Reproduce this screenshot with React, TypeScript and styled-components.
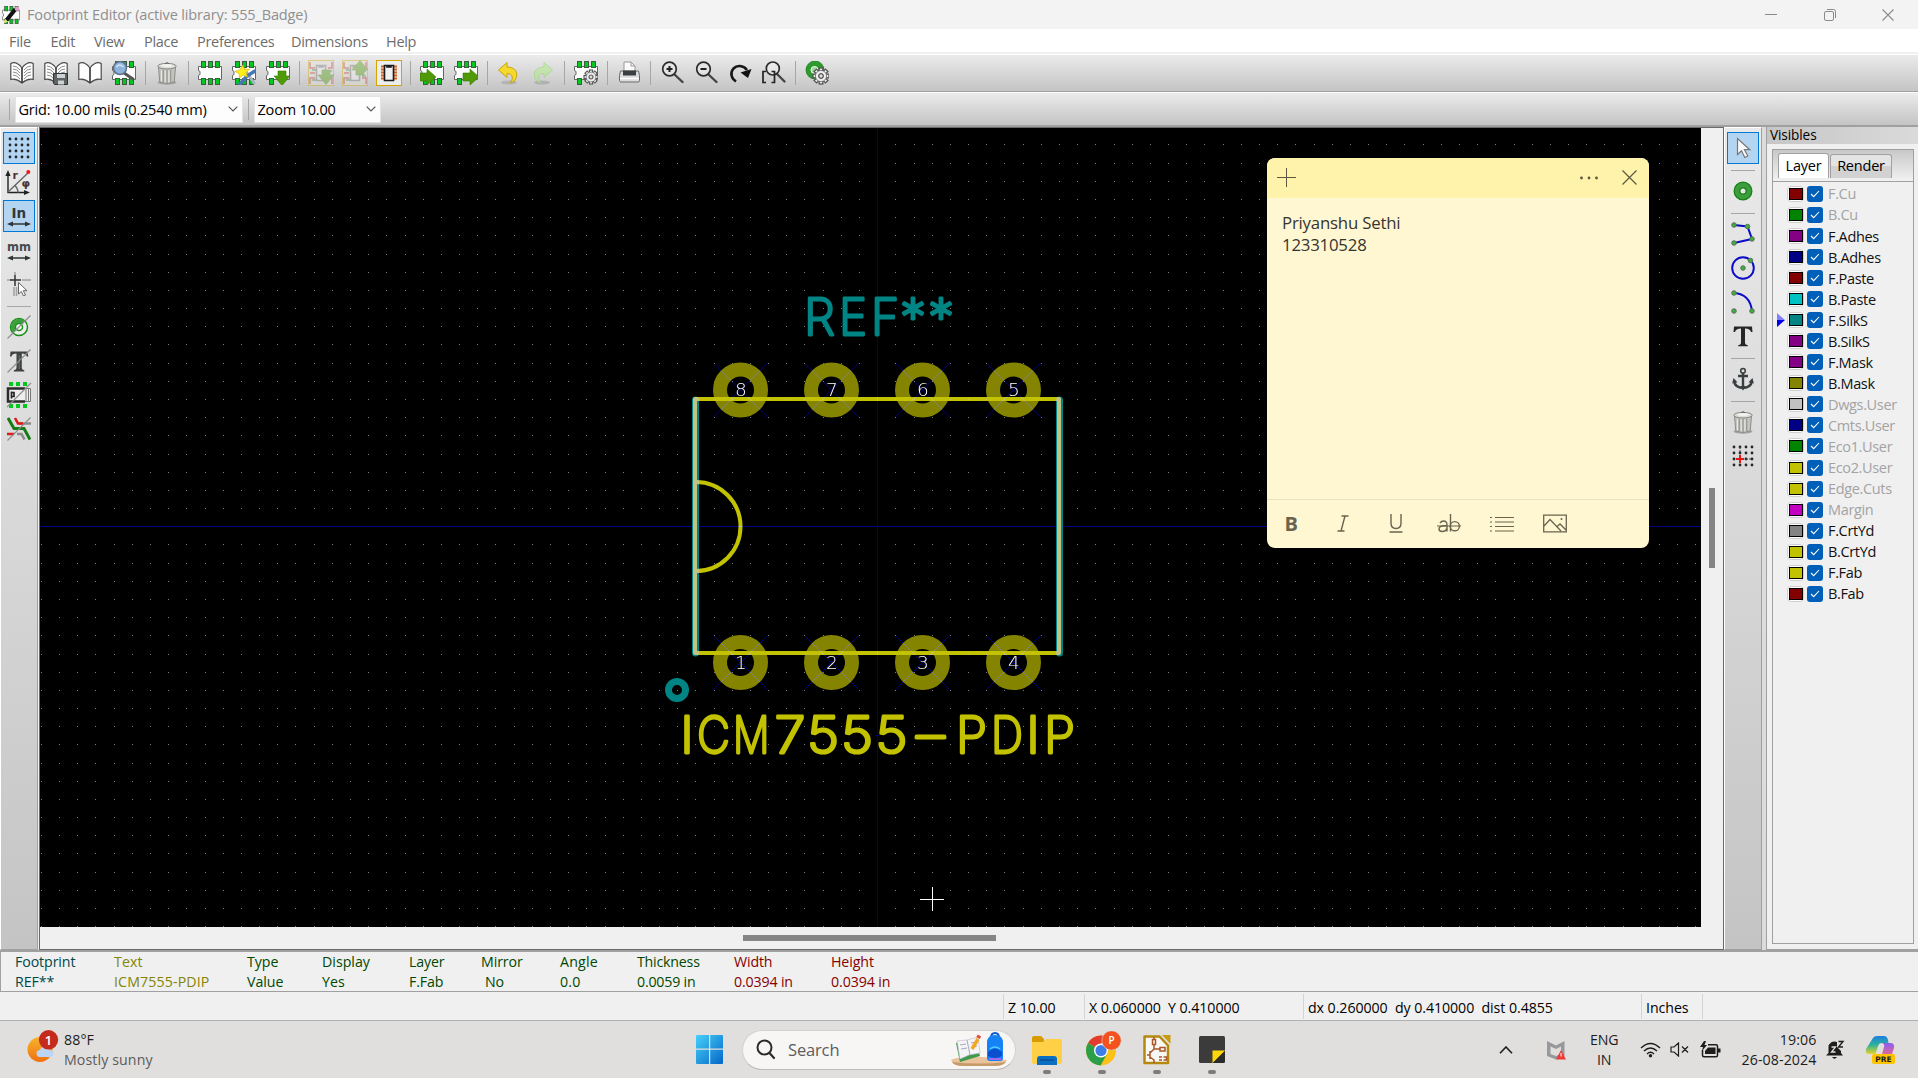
import React from 'react';
import styled, { createGlobalStyle, css } from 'styled-components';

const Global = createGlobalStyle`
  * { box-sizing: border-box; }
  body { margin: 0; overflow: hidden; font-family: "Open Sans", "Noto Sans", sans-serif; }
  svg { display: block; flex: none; }
`;

const Screen = styled.div`
  width: 1918px;
  height: 1078px;
  display: flex;
  flex-direction: column;
  background: #f0f0f0;
  font-size: 14.5px;
  letter-spacing: -0.35px;
  color: #000;
  overflow: hidden;
`;

/* ---------- window chrome ---------- */
const TitleBar = styled.header`
  height: 29px;
  flex: none;
  display: flex;
  align-items: center;
  background: #f3f3f3;
  color: #8f8f8f;
  padding-left: 2px;
`;
const Title = styled.span`
  margin-left: 7px;
  flex: 1;
  line-height: 29px;
  letter-spacing: -0.14px;
`;
const WindowControls = styled.div`
  display: flex;
  width: 177px;
  justify-content: space-between;
  padding: 0 24px 0 24px;
`;
const MenuBar = styled.nav`
  height: 23px;
  flex: none;
  display: flex;
  background: #fff;
  padding-left: 9px;
  color: #6d6d6d;
  line-height: 25px;
`;
const MenuItem = styled.span<{ $w: number }>`
  width: ${(p) => p.$w}px;
  letter-spacing: -0.3px;
  white-space: nowrap;
`;

const barSurface = css`
  display: flex;
  flex: none;
  align-items: center;
  border-top: 1px solid #fff;
  background: linear-gradient(#ebebeb, #c4c4c4);
`;
const MainToolbar = styled.div`
  ${barSurface}
  height: 38px;
  margin-top: 2px;
  padding-left: 5px;
  border-bottom: 1px solid #a0a0a0;
`;
const OptionsBar = styled.div`
  ${barSurface}
  height: 35px;
  border-bottom: 2px solid #a0a0a0;
`;
const ToolButton = styled.button<{ $faded?: boolean }>`
  width: 34px;
  height: 34px;
  border: 0;
  padding: 0;
  background: none;
  display: flex;
  align-items: center;
  justify-content: center;
  opacity: ${(p) => (p.$faded ? 0.4 : 1)};
`;
const ToolSeparator = styled.i`
  width: 1px;
  height: 24px;
  margin: 0 4px;
  background: #a6a6a6;
`;
const BarGrip = styled.i<{ $ml: number; $mr: number }>`
  width: 1px;
  height: 21px;
  background: #a6a6a6;
  margin: 0 ${(p) => p.$mr}px 0 ${(p) => p.$ml}px;
`;
const Combo = styled.div<{ $w: number }>`
  width: ${(p) => p.$w}px;
  height: 27px;
  display: flex;
  align-items: center;
  justify-content: space-between;
  background: #fdfdfd;
  border: 1px solid #e3e3e3;
  border-radius: 1px;
  padding: 0 4px 0 2.5px;
  letter-spacing: -0.18px;
`;

/* ---------- work area ---------- */
const WorkArea = styled.main`
  height: 823px;
  flex: none;
  display: flex;
`;
const SideBar = styled.aside`
  width: 38px;
  flex: none;
  display: flex;
  flex-direction: column;
  align-items: center;
  padding-top: 4px;
  border-left: 1px solid #fff;
  border-top: 1px solid #fff;
  border-right: 1px solid #a0a0a0;
  border-bottom: 1px solid #a0a0a0;
  background: linear-gradient(#eaeaea, #c4c4c4);
`;
const SideButton = styled.button<{ $on?: boolean }>`
  width: 32px;
  height: 32px;
  flex: none;
  margin-bottom: 2px;
  padding: 0;
  display: flex;
  align-items: center;
  justify-content: center;
  border: 1px solid ${(p) => (p.$on ? '#0078d7' : 'transparent')};
  background: ${(p) => (p.$on ? '#b3d5f2' : 'none')};
`;
const SideSeparator = styled.i`
  height: 1px;
  width: 24px;
  flex: none;
  margin: 4px 0 4px;
  background: #a6a6a6;
`;
const CanvasFrame = styled.section`
  width: 1685px;
  flex: none;
  display: grid;
  grid-template: 799px 1fr / 1661px 1fr;
  border: 1px solid #696969;
  background: #f0f0f0;
  margin-left: 1px;
  position: relative;
`;
const ScrollTrack = styled.div<{ $vertical?: boolean }>`
  grid-area: ${(p) => (p.$vertical ? '1 / 2' : '2 / 1')};
  padding: ${(p) => (p.$vertical ? '360px 0 0 8px' : '8px 0 0 703px')};
`;
const ScrollThumb = styled.div<{ $vertical?: boolean }>`
  width: ${(p) => (p.$vertical ? 6 : 253)}px;
  height: ${(p) => (p.$vertical ? 80 : 6)}px;
  background: #858585;
`;

/* ---------- sticky note floating above the canvas ---------- */
const Note = styled.div`
  position: absolute;
  left: 1227px;
  top: 30px;
  width: 382px;
  height: 390px;
  border-radius: 8px;
  background: #fff7d1;
  display: flex;
  flex-direction: column;
  overflow: hidden;
  color: #35342f;
`;
const NoteHead = styled.div`
  height: 40px;
  background: #fff2ab;
  display: flex;
  align-items: center;
  padding: 0 12.5px 1px 10px;
`;
const NoteActions = styled.div`
  margin-left: auto;
  display: flex;
  align-items: center;
  gap: 23.5px;
`;
const NoteBody = styled.div`
  flex: 1;
  padding: 14px 15px;
  font-size: 16.8px;
  line-height: 22px;
  letter-spacing: -0.2px;
`;
const NoteFoot = styled.div`
  height: 49px;
  border-top: 1px solid #eae3c3;
  display: flex;
  align-items: center;
  color: #69644f;
  padding-bottom: 1px;
`;
const NoteTool = styled.span<{ $bold?: boolean }>`
  width: ${(p) => (p.$bold ? 48 : 53)}px;
  height: 32px;
  display: flex;
  align-items: center;
  justify-content: center;
  font-size: 20px;
  font-weight: ${(p) => (p.$bold ? 700 : 400)};
  & + & { padding-left: 3px; }
`;

/* ---------- layers panel ---------- */
const PanelDivider = styled.i`
  width: 5px;
  flex: none;
  background: #dcdcdc;
  border-right: 1px solid #a0a0a0;
`;
const Visibles = styled.aside`
  flex: 1;
  display: flex;
  flex-direction: column;
  border-bottom: 1px solid #a0a0a0;
`;
const PanelTitle = styled.div`
  height: 17px;
  padding-left: 3px;
  line-height: 15px;
  font-size: 13.6px;
  letter-spacing: -0.1px;
  background: linear-gradient(90deg, #c6c6c6, #dadada);
`;
const Notebook = styled.div`
  flex: 1;
  margin: 5px 4px 5px 5px;
  border: 1px solid #a0a0a0;
  display: flex;
  flex-direction: column;
`;
const TabStrip = styled.div`
  height: 32px;
  display: flex;
  align-items: flex-end;
  gap: 1px;
  padding: 0 0 3px 5px;
  background: linear-gradient(#c8c8c8, #f2f2f2);
  border-bottom: 1px solid #a0a0a0;
`;
const Tab = styled.span<{ $active?: boolean }>`
  height: ${(p) => (p.$active ? 25 : 24)}px;
  width: ${(p) => (p.$active ? 51 : 62)}px;
  text-align: center;
  line-height: ${(p) => (p.$active ? 23 : 21)}px;
  letter-spacing: -0.2px;
  border: 1px solid #a0a0a0;
  border-bottom: 0;
  border-radius: 3px 3px 0 0;
  background: ${(p) => (p.$active ? '#fff' : 'linear-gradient(#e4e4e4 50%, #d2d2d2 50%)')};
`;
const LayerList = styled.div`
  padding: 1.4px 0 0 4px;
`;
const LayerRow = styled.div<{ $dim?: boolean }>`
  height: 21.05px;
  display: flex;
  align-items: center;
  color: ${(p) => (p.$dim ? '#a3a3a3' : '#111')};
`;
const LayerPointer = styled.span`
  width: 10px;
  height: 14px;
`;
const Swatch = styled.i<{ $color: string }>`
  width: 17px;
  height: 16px;
  border: 1px solid #cfcfcf;
  border-radius: 4px;
  background: #fdfdfd;
  display: flex;
  align-items: center;
  justify-content: center;
  &::before {
    content: '';
    width: 12px;
    height: 10px;
    border: 1px solid #000;
    background: ${(p) => p.$color};
  }
`;
const Check = styled.i`
  width: 16px;
  height: 16px;
  margin: 0 5px 0 3px;
  border-radius: 3px;
  background: #005fb8;
  display: flex;
  align-items: center;
  justify-content: center;
`;

/* ---------- message panel and status bar ---------- */
const MessagePanel = styled.div`
  height: 42px;
  flex: none;
  display: flex;
  border: 1px solid #a0a0a0;
  border-top-width: 2px;
  border-right: 0;
  padding: 0 0 0 14px;
`;
const Message = styled.dl<{ $w: number; $color: string; $ls: number }>`
  margin: 0;
  width: ${(p) => p.$w}px;
  color: ${(p) => p.$color};
  line-height: 20px;
  font-size: 14.2px;
  letter-spacing: ${(p) => p.$ls}px;
  white-space: nowrap;
  dt, dd { margin: 0; }
`;
const MessageValue = styled.dd<{ $indent?: number }>`
  padding-left: ${(p) => p.$indent ?? 0}px;
`;
const StatusBar = styled.div`
  height: 29px;
  flex: none;
  display: flex;
  border-bottom: 1px solid #b0b0b0;
  padding: 2px 0 1px 1003px;
`;
const StatusField = styled.span<{ $w: number }>`
  width: ${(p) => p.$w}px;
  border-left: 1px solid #d4d4d4;
  padding-left: 4px;
  line-height: 27px;
  white-space: pre;
  font-size: 14.2px;
  letter-spacing: -0.06px;
`;

/* ---------- taskbar ---------- */
const Taskbar = styled.footer`
  height: 57px;
  flex: none;
  display: flex;
  align-items: center;
  background: #e1dfdd;
  color: #1d1d1d;
`;
const Weather = styled.div`
  width: 669px;
  display: flex;
  align-items: center;
  padding-left: 26px;
  gap: 5px;
  font-size: 14.2px;
  line-height: 20px;
  letter-spacing: 0.1px;
`;
const Muted = styled.div`
  color: #5b5b5b;
`;
const SearchPill = styled.div`
  width: 274px;
  height: 40px;
  margin: 0 3px 0 16px;
  border-radius: 20px;
  background: #f7f6f5;
  border: 1px solid #d3d1cf;
  border-bottom-color: #bdbbb9;
  display: flex;
  align-items: center;
  padding: 0 7px 0 13px;
  color: #5c5c5c;
  font-size: 16.5px;
  letter-spacing: -0.15px;
  overflow: hidden;
`;
const SearchLabel = styled.span`
  flex: 1;
  padding-left: 12px;
`;
const AppSlot = styled.div`
  width: 55px;
  height: 57px;
  display: flex;
  flex-direction: column;
  align-items: center;
  padding-top: 10px;
  &::after {
    content: '';
    width: 8px;
    height: 4px;
    border-radius: 2px;
    background: #7f7d7b;
    margin-top: -1px;
  }
`;
const Tray = styled.div`
  flex: 1;
  display: flex;
  align-items: center;
  justify-content: flex-end;
  padding-right: 23px;
  font-size: 14.2px;
  line-height: 20px;
  white-space: nowrap;
`;
const TrayItem = styled.div<{ $mr: number; $align?: string; $ls?: number }>`
  margin-right: ${(p) => p.$mr}px;
  text-align: ${(p) => p.$align ?? 'center'};
  letter-spacing: ${(p) => p.$ls ?? 0}px;
`;

/* ---------- icon building blocks ---------- */
type Kids = { children?: React.ReactNode };
const I24 = ({ children }: Kids) => (
  <svg width="24" height="24" viewBox="0 0 24 24" fill="none">{children}</svg>
);

const Module = ({ bottom = [3, 10, 17] }: { bottom?: number[] }) => (
  <g>
    <path d="M.5 5.500h23v13H.5v-4l1.500-1v-3L.5 9.500z" fill="#fff" stroke="#666" />
    {[3, 10, 17].map((x) => <rect key={x} x={x + 0.5} y=".5" width="4" height="6" fill="#00c81e" stroke="#3f5a42" />)}
    {bottom.map((x) => <rect key={x} x={x + 0.5} y="17.500" width="4" height="6" fill="#00c81e" stroke="#3f5a42" />)}
  </g>
);
const Book = ({ lines = true }: { lines?: boolean }) => (
  <g>
    <path d="M1 19l11 4 11-4 1 3-12 2-12-2z" fill="#d2d2d2" />
    <path d="M.8 2.500C4 .8 8 2 12 7c4-5 8-6.200 11.200-4.500v16C19 17.500 15.500 19 12 22 8.500 19 5 17.500.8 18.500z" fill="#fff" stroke="#4a4a4a" strokeWidth="1.200" />
    <path d="M12 7v15" stroke="#333" strokeWidth="1.600" />
    {lines && <path d="M3 5q4 0 7 4M3 8q4 0 7 4M3 11q4 0 7 4M3 14q4 0 7 4M21 5q-4 0-7 4M21 8q-4 0-7 4M21 11q-4 0-7 4M21 14q-4 0-7 4" stroke="#8a8a8a" strokeWidth="1" />}
  </g>
);
const Gear = ({ x, y, r = 7 }: { x: number; y: number; r?: number }) => (
  <g transform={`translate(${x} ${y}) scale(${r / 8})`}>
    {[0, 45, 90, 135].map((a) => <rect key={a} x="-1.800" y="-8" width="3.600" height="16" fill="#eee" stroke="#555" strokeWidth="1.300" transform={`rotate(${a})`} />)}
    <circle r="5.600" fill="#eee" stroke="#666" strokeWidth=".8" />
    <circle r="2.300" fill="#ddd" stroke="#555" strokeWidth="1.300" />
  </g>
);
const Lens = ({ children }: Kids) => (
  <I24>
    <g transform="translate(1 0)">
      <path d="M13 13l8.500 8" stroke="#444" strokeWidth="2.400" strokeLinecap="round" />
      <circle cx="8.500" cy="8" r="6.800" fill="#e9e9e9" fillOpacity=".6" stroke="#2b2b2b" strokeWidth="1.700" />
      {children}
    </g>
  </I24>
);
const Trash = () => (
  <I24>
    <ellipse cx="12" cy="21.500" rx="9.500" ry="2.200" fill="#a2a2a2" />
    <path d="M3.500 6l1.300 15q7.200 3 14.400 0L20.500 6z" fill="#c4c4c0" stroke="#8b8b87" />
    <path d="M8.300 9v12.500M12 9v13M15.700 9v12.500" stroke="#9a9a95" strokeWidth="1.300" />
    <path d="M6.500 9.500v11M10.200 9.500v12M13.900 9.500v12" stroke="#e9e9e6" />
    <ellipse cx="12" cy="5.200" rx="9.200" ry="2.800" fill="#dcdcd8" stroke="#84847f" />
    <ellipse cx="12" cy="4.600" rx="6" ry="1.400" fill="#f3f3f1" />
    <path d="M10 2.800q2-2.500 4 0" stroke="#666" />
  </I24>
);
const Chip = ({ plain }: { plain?: boolean }) => (
  <svg width="26" height="26" viewBox="0 0 26 26" fill="none">
    <rect x=".5" y=".5" width="25" height="25" fill={plain ? '#ededed' : '#e6e3d6'} stroke="#d6a500" />
    {!plain && (
      <path d="M2 2v6h5M24 2v6h-4M2 13h5M2 24v-6h5M24 24v-6h-4" stroke="#c33" strokeWidth="1.500" />
    )}
    {!plain && <path d="M4 10h4M4 20h4M20 11h4M20 16h4" stroke="#2a9a3a" strokeWidth="1.500" />}
    {plain && [6, 9, 12, 15, 18].map((y) => <path key={y} d={`M5 ${y + 0.5}h3M18 ${y + 0.5}h3`} stroke="#d4631c" strokeWidth="2" />)}
    <path d="M8.500 5.500h9v15h-9zM11 5.500v1.500h4V5.500" fill="#f1f1f1" stroke={plain ? '#1b1b1b' : '#777'} strokeWidth="1.600" />
  </svg>
);
const GreenDown = ({ x = 16, y = 17 }: { x?: number; y?: number }) => (
  <path transform={`translate(${x} ${y})`} d="M-4-7h8v5h4L0 7.500-8-2h4z" fill="#4f9a06" stroke="#3a7c05" strokeWidth=".6" />
);
const GreenRight = ({ x = 8, y = 16 }: { x?: number; y?: number }) => (
  <path transform={`translate(${x} ${y})`} d="M-8-4h7v-4L8 0-1 8V4h-7z" fill="#4f9a06" stroke="#3a7c05" strokeWidth=".6" />
);
const DoubleArrow = () => <path d="M2 20h20" stroke="#2f3436" strokeWidth="1.500" />;
const ArrowHeads = () => <path d="M0 20l6-2.600v5.200zM24 20l-6-2.600v5.200z" fill="#2f3436" />;
const Slash = () => <path d="M.5 23.500l23-23" stroke="#8d8d8d" strokeWidth="1.100" />;
const DotGrid = () => (
  <g fill="#25282a">
    {[3, 9, 15, 21].map((y) => [3, 9, 15, 21].map((x) => <circle key={`${x}-${y}`} cx={x} cy={y} r="1.400" />))}
  </g>
);
const IconText = styled.text`
  font-family: "DejaVu Sans", sans-serif;
  font-weight: 700;
  letter-spacing: 0;
`;
const Node = ({ x, y }: { x: number; y: number }) => <circle cx={x} cy={y} r="2.300" fill="#3cae3c" stroke="#5a6a5a" strokeWidth=".9" />;

const mainTools: { icon?: React.ReactNode; faded?: boolean }[] = [
  { icon: <I24><Book /></I24> },
  { icon: <I24><Book /><path d="M9.500 12.500h14v11h-13l-1-1z" fill="#5e6366" stroke="#2f3436" /><path d="M13 13h8v4h-8zM14 19.500h6v4h-6z" fill="#cfd2d3" /></I24> },
  { icon: <I24><Book lines={false} /></I24> },
  { icon: <I24><Module /><path d="M12 12l9 6" stroke="#555" strokeWidth="3" strokeLinecap="round" /><circle cx="8" cy="7" r="6.500" fill="#8fb4dc" stroke="#5b7189" strokeWidth="1.500" /><path d="M4.500 6q3-4 7 0" stroke="#d6e5f5" strokeWidth="1.500" /></I24> },
  {},
  { icon: <Trash /> },
  {},
  { icon: <I24><Module /></I24> },
  { icon: <I24><Module /><path d="M13 9l9 13" stroke="#a8b4c4" strokeWidth="3" strokeLinecap="round" /><path d="M23 10l-8 5-7 8" stroke="#4876b5" strokeWidth="3.500" strokeLinecap="round" /><path d="M11 4l1.500 4.500 5-.5-3.500 3.500 1.500 4.500-4.500-2-3.500 3-.5-4.500-4-2 4.500-1.500z" fill="#ffee1a" stroke="#d9ba00" strokeWidth=".7" /></I24> },
  { icon: <I24><Module bottom={[3]} /><GreenDown /></I24> },
  {},
  { icon: <svg width="26" height="26" viewBox="0 0 26 26"><Chip /><GreenDown x={18} y={17} /></svg>, faded: true },
  { icon: <svg width="26" height="26" viewBox="0 0 26 26"><Chip /><g transform="rotate(180 18 8)"><GreenDown x={18} y={8} /></g></svg>, faded: true },
  { icon: <Chip plain /> },
  {},
  { icon: <I24><Module /><GreenRight /></I24> },
  { icon: <I24><Module bottom={[3]} /><GreenRight x={17} /></I24> },
  {},
  { icon: <I24><ellipse cx="12" cy="21.500" rx="8" ry="2" fill="#b3b3b3" /><path d="M1.500 9L10 1.500V6c7 0 10.500 4 9.500 9.500-.6 3.500-3 5.500-6.500 6.500 3.500-3.500 3.500-9.500-3-9.500v4z" fill="#f3da2c" stroke="#c9a40a" /></I24> },
  { icon: <I24><ellipse cx="11" cy="21.500" rx="8" ry="2" fill="#888" /><path d="M21.500 9L13 1.500V6C6 6 2.500 10 3.500 15.500c.6 3.500 3 5.500 6.500 6.500-3.500-3.500-3.500-9.500 3-9.500v4z" fill="#a6f06c" stroke="#6fcf45" /></I24>, faded: true },
  {},
  { icon: <I24><Module bottom={[3]} /><Gear x={17} y={16} /></I24> },
  {},
  { icon: <I24><path d="M7 1h7l4 4v8H7z" fill="#fafafa" stroke="#999" /><path d="M14 1v4h4" stroke="#999" /><path d="M3.500 10h18l1 4.500v5q0 1.500-1.500 1.500H4q-1.500 0-1.500-1.500v-5z" fill="#dcdcdc" stroke="#6a6a6a" /><path d="M6 9.500h13v5H6z" fill="#3a3f42" /><path d="M3 17.500h19" stroke="#fff" strokeWidth="1.500" /></I24> },
  {},
  { icon: <Lens><path d="M8.500 5v6M5.500 8h6" stroke="#222" strokeWidth="2" /></Lens> },
  { icon: <Lens><path d="M5.500 8h6" stroke="#222" strokeWidth="2" /></Lens> },
  { icon: <I24><path d="M8 20.500C3 17.500 2 11.500 5.500 7.500 9 4 15 4 19 9" stroke="#161616" strokeWidth="2.600" /><path d="M12.500 11.500L23.500 8 20 17z" fill="#111" /></I24> },
  { icon: <I24><path d="M14.500 12.500l8 8" stroke="#444" strokeWidth="2.400" strokeLinecap="round" /><circle cx="10.800" cy="7.500" r="6.500" fill="#eee" fillOpacity=".6" stroke="#2b2b2b" strokeWidth="1.700" /><path d="M4 10.500H1v11h3M9.500 10.500h3v11h-3" stroke="#222" strokeWidth="1.700" /></I24> },
  {},
  { icon: <I24><circle cx="10" cy="9" r="9" fill="#2d9a2d" stroke="#1a7d1a" strokeWidth=".8" /><circle cx="9.500" cy="9" r="3.500" fill="#9fd49f" stroke="#fff" /><Gear x={16} y={15} r={8} /></I24> },
];

const LeftTools = () => (
  <SideBar>
    <SideButton $on><I24><DotGrid /></I24></SideButton>
    <SideButton>
      <svg width="28" height="26" viewBox="-1 -1 28 26" fill="none">
        <path d="M2 4v18.500h19" stroke="#222" strokeWidth="1.400" />
        <path d="M2 0l2.600 6H-.6zM24 22.500l-6 2.400v-4.800z" fill="#222" />
        <path d="M2 22L22 3M9 15.500q3 3 3 7" stroke="#666" strokeWidth="1.400" />
        <circle cx="22.300" cy="2" r="2" fill="#f21616" />
        <IconText x="6.500" y="9" fontSize="11" fill="#4b3535">r</IconText>
        <IconText x="15.500" y="17" fontSize="11" fill="#4b3535">φ</IconText>
      </svg>
    </SideButton>
    <SideButton $on>
      <I24><DoubleArrow /><ArrowHeads /><IconText x="4.500" y="13.500" fontSize="13.500" fill="#33383a">In</IconText></I24>
    </SideButton>
    <SideButton>
      <svg width="30" height="28" viewBox="-3 -2 30 28"><DoubleArrow /><ArrowHeads /><IconText x="0" y="13" fontSize="13" textLength="24" lengthAdjust="spacingAndGlyphs" fill="#4a4a4a">mm</IconText></svg>
    </SideButton>
    <SideButton>
      <I24>
        <path d="M0 8h4M15 8h9M8 0v3M7 15v9M9.500 15v9" stroke="#a3a3a3" strokeWidth="1.600" />
        <path d="M8 3v11M3 8h11" stroke="#333" strokeWidth="1.500" />
        <path d="M11.500 10.500v11.500l2.800-2.500 2.200 4.500 2-1-2.200-4.300h3.700z" fill="#fff" stroke="#555" strokeWidth=".9" />
      </I24>
    </SideButton>
    <SideSeparator />
    <SideButton>
      <I24><circle cx="12" cy="12" r="8.500" fill="#eee" stroke="#1a8f1a" strokeWidth="1.500" /><path d="M6 18A8.500 8.500 0 0 1 18 6z" fill="#3da03d" /><circle cx="12" cy="12" r="3.500" fill="#fff" stroke="#1a8f1a" strokeWidth="1.500" /><Slash /></I24>
    </SideButton>
    <SideButton>
      <I24><path d="M3.500 2.500h17l.8 5h-1.500q-.8-3-5-3V19q0 2 2.500 2.200v1.300H6.800v-1.300Q9.500 21 9.500 19V4.500q-4.500 0-5 3H3z" fill="#3f4243" /><path d="M12.200 6v14" stroke="#888" strokeWidth=".7" /><Slash /></I24>
    </SideButton>
    <SideButton>
      <svg width="26" height="26" viewBox="0 0 26 26" fill="none">
        <path d="M3 0h4v4H3zM10 0h4v4h-4zM17 0h4v4h-4zM3 22h4v4H3zM10 22h4v4h-4zM17 22h4v4h-4z" fill="#00c81e" />
        <path d="M2.500 6.500h22v13h-22z" fill="#eee" stroke="#777" />
        <path d="M20 7v12M22.500 7v12" stroke="#777" />
        <path d="M19 6.500H2v13h17" stroke="#2b2b2b" strokeWidth="2.500" />
        <path d="M5.500 9.500v7M5 10.500h3v4H5" stroke="#222" strokeWidth="1.700" />
        <path d="M1 25L25 1" stroke="#8d8d8d" strokeWidth="1.100" />
      </svg>
    </SideButton>
    <SideButton>
      <I24>
        <path d="M24 6.500H12M10 17h4.500l3 5.500" stroke="#8b8b8b" strokeWidth="2.600" />
        <path d="M8 1l3 5.500h5M0 17h7" stroke="#e01919" strokeWidth="2.600" />
        <path d="M1 1l6 10.500h10l6 11" stroke="#157d15" strokeWidth="3" />
        <Slash />
      </I24>
    </SideButton>
  </SideBar>
);

const RightTools = () => (
  <SideBar>
    <SideButton $on>
      <I24><path d="M6.500 2.500v16l4-3.800 3.300 6.800 3-1.500-3.400-6.300h5.400z" fill="#fafafa" stroke="#777" strokeWidth="1.200" /></I24>
    </SideButton>
    <SideSeparator />
    <SideButton><I24><circle cx="12" cy="12" r="6" stroke="#178217" strokeWidth="7" /><circle cx="12" cy="12" r="6" stroke="#3c9d3c" strokeWidth="4.500" /></I24></SideButton>
    <SideSeparator />
    <SideButton><I24><path d="M3 3l13.500 1.500L21 17 3 21" stroke="#0a0ac8" strokeWidth="2" /><Node x={3} y={3} /><Node x={16.500} y={4.500} /><Node x={21} y={17} /><Node x={3} y={21} /></I24></SideButton>
    <SideButton><I24><circle cx="12" cy="12" r="10.800" stroke="#0a0ac8" strokeWidth="1.900" /><Node x={12} y={12} /><Node x={19.500} y={4.500} /></I24></SideButton>
    <SideButton><I24><path d="M3 3q16 1 18 18" stroke="#0a0ac8" strokeWidth="1.900" /><Node x={3} y={3} /><Node x={3} y={21} /><Node x={21} y={21} /></I24></SideButton>
    <SideButton><I24><path d="M3 2.500h18l.5 5.500H20q-.8-3.500-6-3.500V19q0 2 2.800 2.200v1H7.200v-1Q10 21 10 19V4.500q-5.200 0-6 3.500H2.500z" fill="#262626" /></I24></SideButton>
    <SideSeparator />
    <SideButton>
      <I24><circle cx="12" cy="3.800" r="2.300" stroke="#3a3f42" strokeWidth="1.600" /><path d="M12 6v14M7 9h10M3 14q1 6.500 9 7 8-.5 9-7" stroke="#3a3f42" strokeWidth="2.400" /><path d="M1.200 16.500L2.500 11l4 4.200zM22.800 16.500L21.500 11l-4 4.200zM9 19h6l-3 4.500z" fill="#3a3f42" /></I24>
    </SideButton>
    <SideSeparator />
    <SideButton><Trash /></SideButton>
    <SideButton><I24><DotGrid /><path d="M9 3v6M15 15h6" stroke="#444" strokeWidth="1" strokeDasharray="2 1" /><path d="M9 11v8M5 15h8" stroke="#e01818" strokeWidth="2" /></I24></SideButton>
  </SideBar>
);

/* ---------- footprint drawing ---------- */
const GRID = 18.18;
const ORIGIN = { x: 877.2, y: 526.25 };

const gridPath = (() => {
  let d = '';
  for (let i = -46; i <= 45; i++) {
    for (let j = -21; j <= 22; j++) {
      const x = Math.round(ORIGIN.x + i * GRID);
      const y = Math.round(ORIGIN.y + j * GRID);
      if (x < 1701 && y < 927) d += `M${x} ${y}h1v1h-1z`;
    }
  }
  return d;
})();

const Drawing = styled.svg`
  background: #000;
  isolation: isolate;
`;
const Strokes = styled.text<{ $color: string }>`
  font-family: "Inter", "Roboto", sans-serif;
  font-weight: 200;
  font-size: 51px;
  letter-spacing: 0;
  fill: ${(p) => p.$color};
  stroke: ${(p) => p.$color};
  stroke-width: 2.9px;
  stroke-linejoin: round;
  stroke-linecap: round;
`;
const PadNumber = styled.text`
  font-family: "DejaVu Sans Light", "DejaVu Sans", sans-serif;
  font-weight: 200;
  font-size: 18.5px;
  letter-spacing: 0;
  fill: #fff;
  text-anchor: middle;
`;
const Blend = styled.g`
  mix-blend-mode: lighten;
`;

type Glyph = [char: string, x: number, advance: number];
const refGlyphs: Glyph[] = [['R', 804, 31], ['E', 839, 28], ['F', 871, 28], ['*', 900, 26], ['*', 928, 26]];
const valueGlyphs: Glyph[] = [
  ['I', 680, 14], ['C', 697, 33], ['M', 733, 36.5], ['7', 774.5, 31], ['5', 807, 32], ['5', 841, 32],
  ['5', 875.5, 32], ['-', 910, 41], ['P', 956, 31], ['D', 991, 32], ['I', 1026, 14], ['P', 1044, 31],
];
const pads: [string, number, number][] = [
  ['8', 740.5, 390], ['7', 831.5, 390], ['6', 922.5, 390], ['5', 1013.5, 390],
  ['1', 740.5, 662.5], ['2', 831.5, 662.5], ['3', 922.5, 662.5], ['4', 1013.5, 662.5],
];

const Board = () => (
  <Drawing width="1661" height="799" viewBox="40 128 1661 799" fill="none">
    <path d={gridPath} fill="#7c7c7c" shapeRendering="crispEdges" />
    <path d="M40 526.500H1701M875 735.500h4" stroke="#000084" />
    <path d="M877.500 128V927" stroke="#00006c" />
    {pads.map(([n, x, y]) => <circle key={n} cx={x} cy={y} r="20.500" stroke="#848400" strokeWidth="14" />)}
    <Blend>
      {pads.map(([n, x, y]) => <path key={n} d={`M${x - 27} ${y - 27}l54 54M${x + 27} ${y - 27}l-54 54`} stroke="#000084" />)}
    </Blend>
    <path d="M695.500 400V653M1059.500 400V653" stroke="#008484" strokeWidth="7" strokeLinecap="round" />
    <Blend>
      <path d="M695 399H1059V653H695z" stroke="#c2c200" strokeWidth="4" strokeLinejoin="round" />
      <path d="M696 482A44.500 44.500 0 0 1 696 571" stroke="#c2c200" strokeWidth="4" />
    </Blend>
    <circle cx="677" cy="690" r="8.500" stroke="#008484" strokeWidth="7" />
    {pads.map(([n, x, y]) => <PadNumber key={n} x={x + 0.5} y={y + 6}>{n}</PadNumber>)}
    <Strokes $color="#008484" y="334.500">
      {refGlyphs.map(([c, x, w], i) => <tspan key={i} x={x} textLength={w} lengthAdjust="spacingAndGlyphs">{c}</tspan>)}
    </Strokes>
    <Strokes $color="#c2c200" y="753">
      {valueGlyphs.map(([c, x, w], i) => <tspan key={i} x={x} textLength={w} lengthAdjust="spacingAndGlyphs">{c}</tspan>)}
    </Strokes>
    <path d="M920 899.500h24M932.500 887v24" stroke="#fff" />
  </Drawing>
);

const StickyNote = () => (
  <Note>
    <NoteHead>
      <svg width="19" height="19" viewBox="0 0 19 19" fill="none"><path d="M0 9.500h19M9.500 0v19" stroke="#5c573f" /></svg>
      <NoteActions>
        <svg width="18" height="4" viewBox="0 0 18 4" fill="#5c573f"><circle cx="1.500" cy="2" r="1.400" /><circle cx="9" cy="2" r="1.400" /><circle cx="16.500" cy="2" r="1.400" /></svg>
        <svg width="15" height="15" viewBox="0 0 15 15" fill="none"><path d="M.5.500l14 14M14.500.500l-14 14" stroke="#5c573f" strokeWidth="1.200" /></svg>
      </NoteActions>
    </NoteHead>
    <NoteBody>
      <div>Priyanshu Sethi</div>
      <div>123310528</div>
    </NoteBody>
    <NoteFoot>
      <NoteTool $bold>B</NoteTool>
      <NoteTool><svg width="12" height="17" viewBox="0 0 12 17" fill="none"><path d="M4.500 1h7M.5 16h7M8 1L4 16" stroke="#69644f" strokeWidth="1.400" /></svg></NoteTool>
      <NoteTool><svg width="14" height="19" viewBox="0 0 14 19" fill="none"><path d="M2 0v9q0 5.500 5 5.500T12 9V0M.5 18h13" stroke="#69644f" strokeWidth="1.400" /></svg></NoteTool>
      <NoteTool><svg width="24" height="19" viewBox="0 0 24 19" fill="none"><path d="M3 9q1.500-2 3.500-2 3.500 0 3.500 4v6.500M10 11.500Q2 11.500 2 15q0 2.500 3.500 2.500Q9 17.500 10 14M13.500 0v17.500" stroke="#69644f" strokeWidth="1.400" /><circle cx="17.800" cy="12.200" r="4.600" stroke="#69644f" strokeWidth="1.400" /><path d="M0 12h24" stroke="#69644f" strokeWidth="1.200" /></svg></NoteTool>
      <NoteTool><svg width="24" height="16" viewBox="0 0 24 16" fill="none"><path d="M5 1.500h19M5 6h19M5 10.500h19M5 15h19M0 1.500h2M0 6h2M0 10.500h2M0 15h2" stroke="#69644f" strokeWidth="1.200" /></svg></NoteTool>
      <NoteTool><svg width="24" height="19" viewBox="0 0 24 19" fill="none"><path d="M.7 1.200h22.600v16.600H.7zM1 12l6-6.500L18 17M13.500 13l3.500-3 6 6" stroke="#69644f" strokeWidth="1.300" /><circle cx="18.500" cy="5" r="1" fill="#69644f" /></svg></NoteTool>
    </NoteFoot>
  </Note>
);

/* ---------- data ---------- */
const layers: [name: string, color: string, dim?: boolean][] = [
  ['F.Cu', '#840000', true], ['B.Cu', '#008400', true], ['F.Adhes', '#840084'], ['B.Adhes', '#000084'],
  ['F.Paste', '#840000'], ['B.Paste', '#00c2c2'], ['F.SilkS', '#008484'], ['B.SilkS', '#840084'],
  ['F.Mask', '#840084'], ['B.Mask', '#848400'], ['Dwgs.User', '#c2c2c2', true], ['Cmts.User', '#000084', true],
  ['Eco1.User', '#008400', true], ['Eco2.User', '#c2c200', true], ['Edge.Cuts', '#c2c200', true],
  ['Margin', '#c200c2', true], ['F.CrtYd', '#848484'], ['B.CrtYd', '#c2c200'], ['F.Fab', '#c2c200'], ['B.Fab', '#840000'],
];
const messages: [label: string, value: string, width: number, color: string, spacing: number, indent?: number][] = [
  ['Footprint', 'REF**', 99, '#004848', -0.1], ['Text', 'ICM7555-PDIP', 133, '#848400', 0.12],
  ['Type', 'Value', 75, '#004800', -0.05], ['Display', 'Yes', 87, '#004800', 0],
  ['Layer', 'F.Fab', 72, '#004800', -0.15], ['Mirror', 'No', 79, '#004800', -0.1, 4],
  ['Angle', '0.0', 77, '#004800', 0.2], ['Thickness', '0.0059 in', 97, '#004800', -0.2],
  ['Width', '0.0394 in', 97, '#840000', -0.15], ['Height', '0.0394 in', 97, '#840000', -0.1],
];
const menus: [string, number][] = [
  ['File', 41.5], ['Edit', 43.5], ['View', 50], ['Place', 53], ['Preferences', 94], ['Dimensions', 95], ['Help', 40],
];

const ComboArrow = () => (
  <svg width="10" height="6" viewBox="0 0 10 6" fill="none"><path d="M.7.700L5 5 9.300.700" stroke="#555" strokeWidth="1.200" /></svg>
);

const SmallText = styled.text`
  font-family: "Open Sans", sans-serif;
  font-weight: 600;
  letter-spacing: 0;
  fill: #fff;
`;

const TaskApps = () => (
  <>
    <AppSlot>
      <svg width="36" height="40" viewBox="0 0 36 40">
        <path d="M3 7q0-2 2-2h7l3 3v6H3z" fill="#d99c00" />
        <path d="M3 11h11l3-3h14q2 0 2 2v21q0 2-2 2H5q-2 0-2-2z" fill="#ffcf45" />
        <path d="M8 34v-6q0-3 3-3h14q3 0 3 3v6z" fill="#0a6fc2" /><path d="M11 29h14" stroke="#0a4f92" strokeWidth="1.500" />
      </svg>
    </AppSlot>
    <AppSlot>
      <svg width="40" height="40" viewBox="0 0 40 40">
        <circle cx="19" cy="19.500" r="15" fill="#fbc116" />
        <path d="M19 19.500L6 12A15 15 0 0 1 32 12L19 12z" fill="#e33b2e" />
        <path d="M6 12A15 15 0 0 0 18.500 34.500l6.500-11.500-6-3.500z" fill="#2b9f47" />
        <circle cx="19" cy="19.500" r="7" fill="#fff" /><circle cx="19" cy="19.500" r="5.600" fill="#3c7de8" />
        <circle cx="29.500" cy="9.500" r="9.700" fill="#f4511e" stroke="#d8d6d4" strokeWidth=".6" />
        <SmallText x="29.500" y="13" fontSize="10" textAnchor="middle">P</SmallText>
      </svg>
    </AppSlot>
    <AppSlot>
      <svg width="36" height="40" viewBox="0 0 36 40" fill="none">
        <path d="M5.500 5.500h15l8.500 9v17.500H5.500z" fill="#faf8f4" stroke="#b5890f" strokeWidth="2.500" strokeLinejoin="round" />
        <path d="M23 4h8.500v9z" fill="#c99a12" />
        <path d="M15 18v-5M13.500 8.500h3v5h-3zM15 6v2.500M8 24h3M11 20v8M11 22l4-4h6M11 26l4 3v3M21 16.500h5v3.500h-5zM20 26h3M20 29h3M24.500 26h3v3h-3" stroke="#a8562a" strokeWidth="1.500" />
      </svg>
    </AppSlot>
    <AppSlot>
      <svg width="36" height="40" viewBox="0 0 36 40">
        <path d="M5 6.500q0-1.500 1.500-1.500h23Q31 5 31 6.500V19L18 32H6.500Q5 32 5 30.500z" fill="#3b3b3b" />
        <path d="M31 19v11.500q0 1.500-1.500 1.500H18z" fill="#2b2b2b" /><path d="M18.500 19.500H31l-12.500 12.500z" fill="#ffd60a" />
      </svg>
    </AppSlot>
  </>
);

export default function App() {
  return (
    <Screen>
      <Global />
      <TitleBar>
        <svg width="18" height="18" viewBox="0 0 24 24" fill="none"><Module /><path d="M6 19L18 4" stroke="#111" strokeWidth="5.500" /><circle cx="20" cy="3.500" r="3" fill="#e59ad0" /><path d="M2 23l2-6 4 4z" fill="#f0e27a" /></svg>
        <Title>Footprint Editor (active library: 555_Badge)</Title>
        <WindowControls>
          <svg width="12" height="12" viewBox="0 0 12 12" fill="none"><path d="M0 5.500h12" stroke="#8a8a8a" /></svg>
          <svg width="12" height="12" viewBox="0 0 12 12" fill="none"><path d="M.5 4q0-1.500 1.500-1.500h6Q9.500 2.500 9.500 4v6q0 1.500-1.500 1.500H2Q.5 11.500.5 10zM3 .500h6.500q2 0 2 2V9" stroke="#8a8a8a" /></svg>
          <svg width="12" height="12" viewBox="0 0 12 12" fill="none"><path d="M.5.500l11 11M11.500.500l-11 11" stroke="#8a8a8a" strokeWidth="1.100" /></svg>
        </WindowControls>
      </TitleBar>
      <MenuBar>
        {menus.map(([m, w]) => <MenuItem key={m} $w={w}>{m}</MenuItem>)}
      </MenuBar>
      <MainToolbar>
        {mainTools.map((t, i) => (t.icon ? <ToolButton key={i} $faded={t.faded}>{t.icon}</ToolButton> : <ToolSeparator key={i} />))}
      </MainToolbar>
      <OptionsBar>
        <BarGrip $ml={9} $mr={5} />
        <Combo $w={228}>Grid: 10.00 mils (0.2540 mm)<ComboArrow /></Combo>
        <BarGrip $ml={5} $mr={5} />
        <Combo $w={127}>Zoom 10.00<ComboArrow /></Combo>
      </OptionsBar>

      <WorkArea>
        <LeftTools />
        <CanvasFrame>
          <Board />
          <ScrollTrack $vertical><ScrollThumb $vertical /></ScrollTrack>
          <ScrollTrack><ScrollThumb /></ScrollTrack>
          <StickyNote />
        </CanvasFrame>
        <RightTools />
        <PanelDivider />
        <Visibles>
          <PanelTitle>Visibles</PanelTitle>
          <Notebook>
            <TabStrip><Tab $active>Layer</Tab><Tab>Render</Tab></TabStrip>
            <LayerList>
              {layers.map(([name, color, dim]) => (
                <LayerRow key={name} $dim={dim}>
                  <LayerPointer>
                    {name === 'F.SilkS' && <svg width="8" height="14" viewBox="0 0 8 14"><path d="M0 0l8 7H0z" fill="#8080ff" /><path d="M0 14l8-7H0z" fill="#0000f0" /></svg>}
                  </LayerPointer>
                  <Swatch $color={color} />
                  <Check><svg width="10" height="8" viewBox="0 0 10 8" fill="none"><path d="M1 4l2.700 2.700L9 1" stroke="#fff" strokeWidth="1.100" /></svg></Check>
                  {name}
                </LayerRow>
              ))}
            </LayerList>
          </Notebook>
        </Visibles>
      </WorkArea>

      <MessagePanel>
        {messages.map(([label, value, w, color, ls, indent]) => (
          <Message key={label} $w={w} $color={color} $ls={ls}>
            <dt>{label}</dt>
            <MessageValue $indent={indent}>{value}</MessageValue>
          </Message>
        ))}
      </MessagePanel>
      <StatusBar>
        <StatusField $w={81}>Z 10.00</StatusField>
        <StatusField $w={219}>{'X 0.060000  Y 0.410000'}</StatusField>
        <StatusField $w={338}>{'dx 0.260000  dy 0.410000  dist 0.4855'}</StatusField>
        <StatusField $w={61}>Inches</StatusField>
        <StatusField $w={20} />
      </StatusBar>

      <Taskbar>
        <Weather>
          <svg width="33" height="40" viewBox="0 0 33 40">
            <defs><linearGradient id="sun" x1="0" y1="0" x2="0" y2="1"><stop offset="0" stopColor="#f7b52c" /><stop offset="1" stopColor="#ef7012" /></linearGradient></defs>
            <circle cx="14" cy="19.500" r="12.500" fill="url(#sun)" />
            <path d="M14 27a3.500 3.500 0 0 1 0-7 5 5 0 0 1 9.500 0 3.500 3.500 0 0 1 1 7z" fill="#bcd4f5" />
            <circle cx="22.500" cy="9.800" r="9.700" fill="#c42b1c" />
            <SmallText x="22.500" y="14.500" fontSize="13" textAnchor="middle">1</SmallText>
          </svg>
          <div><div>88°F</div><Muted>Mostly sunny</Muted></div>
        </Weather>
        <svg width="57" height="31" viewBox="-26 0 57 31">
          <defs><linearGradient id="win" x1="0" y1="0" x2="1" y2="1"><stop offset="0" stopColor="#48d0fb" /><stop offset="1" stopColor="#0467c7" /></linearGradient></defs>
          <path d="M1 2q0-1 1-1h12v13.500H1zM15.200 1H27q1 0 1 1v12.500H15.200zM1 15.800h13V30H2q-1 0-1-1zM15.200 15.800H28V29q0 1-1 1H15.200z" fill="url(#win)" />
        </svg>
        <SearchPill>
          <svg width="20" height="21" viewBox="0 0 20 21" fill="none"><circle cx="8.500" cy="8.500" r="7" stroke="#2b2b2b" strokeWidth="2" /><path d="M13.500 14l4.500 5" stroke="#2b2b2b" strokeWidth="2.200" strokeLinecap="round" /></svg>
          <SearchLabel>Search</SearchLabel>
          <svg width="58" height="36" viewBox="0 0 58 36">
            <path d="M1 28q14-7 56 0-3 6-12 6H14Q3 34 1 28z" fill="#e8c39b" /><path d="M2 30q27 3 54 0-3 4-11 4H14Q4 34 2 30z" fill="#c79a6c" />
            <path d="M6 11l20-3 4 16-20 6z" fill="#3f9a4d" /><path d="M7 9l10-1 11-3 2 16-11 2-9 4z" fill="#f4f4f8" stroke="#b8b8c4" strokeWidth=".6" />
            <path d="M17 8l3 15M10 13l6-1M11 17l6-1M21 11l5-1M22 15l5-1" stroke="#a8a8b8" /><path d="M22 17l6-10" stroke="#f5a623" strokeWidth="3.500" /><path d="M28 6l1.500-2.500" stroke="#e2503c" strokeWidth="4" />
            <path d="M41 6q0-5 4-5t4 5" stroke="#0b5ad0" strokeWidth="2" fill="none" />
            <path d="M37 11q0-8 8-8t8 8v15q0 3-3 3H40q-3 0-3-3z" fill="#1583f5" /><path d="M38 20q7-7 14 0v4q-7 4-14 0z" fill="#0a4fd0" /><path d="M40 17q5-4 10 0" stroke="#4dd0ff" strokeWidth="1.500" fill="none" /><path d="M39 27h12" stroke="#a368f0" strokeWidth="2" />
          </svg>
        </SearchPill>
        <TaskApps />
        <Tray>
          <TrayItem $mr={34}><svg width="14" height="8" viewBox="0 0 14 8" fill="none"><path d="M1 7.200L7 1l6 6.200" stroke="#1d1d1d" strokeWidth="1.600" /></svg></TrayItem>
          <TrayItem $mr={24}>
            <svg width="19" height="20" viewBox="0 0 19 20"><path d="M0 1l9 4.500L17.500 1v15L9 19.500 0 16zM3.500 6.500v7.500l5.500 2 5-2V6.500L9 9z" fill="#97999d" fillRule="evenodd" /><path d="M14 10l5 9.500H9z" fill="#ee3a33" /><path d="M14 13v3.500" stroke="#fff" /></svg>
          </TrayItem>
          <TrayItem $mr={22} $ls={-0.1}><div>ENG</div><div>IN</div></TrayItem>
          <TrayItem $mr={9}>
            <svg width="21" height="16" viewBox="0 0 21 16" fill="none"><path d="M1 6q9.500-9 19 0M4 9q6.500-6 13 0M7 12q3.500-3.300 7 0" stroke="#1d1d1d" strokeWidth="1.400" /><circle cx="10.500" cy="13.800" r="1.700" fill="#1d1d1d" /></svg>
          </TrayItem>
          <TrayItem $mr={10}>
            <svg width="20" height="15" viewBox="0 0 20 15" fill="none"><path d="M1 5h3l4.500-4v13L4 10H1zM12 4.500l6 6M18 4.500l-6 6" stroke="#1d1d1d" strokeWidth="1.200" /></svg>
          </TrayItem>
          <TrayItem $mr={20}>
            <svg width="21" height="17" viewBox="0 0 21 17" fill="none"><path d="M8 3.700h8q1.500 0 1.500 1.500v9q0 1.500-1.500 1.500H4q-1.500 0-1.500-1.500V9" stroke="#1d1d1d" strokeWidth="1.500" /><path d="M8 6.500h7.500v6.500H5V10zM18 7.500h2.500v4H18zM4 0L0 6h3L2 10l5-6H4.500L6 0z" fill="#1d1d1d" /></svg>
          </TrayItem>
          <TrayItem $mr={9.5} $align="right" $ls={0.1}><div>19:06</div><div>26-08-2024</div></TrayItem>
          <TrayItem $mr={20}>
            <svg width="19" height="20" viewBox="0 0 19 20"><path d="M2.500 13V8a6 6 0 0 1 8.500-6v5l4 4v2l2 2.500H0zM6 17h5q-2.500 3.500-5 0z" fill="#1d1d1d" /><path d="M12.500 1.500H17L12.500 7H17" stroke="#1d1d1d" strokeWidth="1.400" fill="none" /><path d="M5.500 7h4l-4 5h4" stroke="#e1dfdd" strokeWidth="1.300" fill="none" /></svg>
          </TrayItem>
          <svg width="30" height="30" viewBox="0 0 30 30">
            <defs>
              <linearGradient id="cpa" x1="0" y1="0" x2="0" y2="1"><stop offset="0" stopColor="#1b7fe0" /><stop offset=".5" stopColor="#2fb39a" /><stop offset="1" stopColor="#e9d227" /></linearGradient>
              <linearGradient id="cpb" x1="0" y1="0" x2="0" y2="1"><stop offset="0" stopColor="#8c5cf0" /><stop offset="1" stopColor="#f9707c" /></linearGradient>
            </defs>
            <path d="M8 3q1-2 4-2h7q3 0 4 4l.5 3H17q-3 0-4 3l-2.500 8H4q-4 0-3-5z" fill="url(#cpa)" />
            <path d="M17 8h8q5 0 4 5l-2 6q-1 4-5 4h-9q3-1 4-4l2-7q1-3-2-4z" fill="url(#cpb)" />
            <rect x="7" y="19" width="23" height="10" rx="2" fill="#ffc400" />
            <IconText x="18.500" y="27" fontSize="7.500" textAnchor="middle" fill="#1d1d1d">PRE</IconText>
          </svg>
        </Tray>
      </Taskbar>
    </Screen>
  );
}
